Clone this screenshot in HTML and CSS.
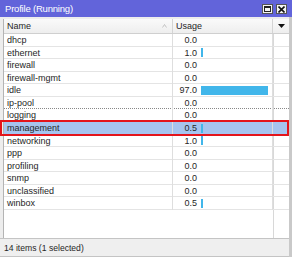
FILE: index.html
```html
<!DOCTYPE html>
<html lang="en">
<head>
  <meta charset="UTF-8">
  <title>Profile (Running)</title>
  <link rel="stylesheet" href="styles.css">
</head>
<body>
  <div class="window">
    <div class="titlebar">
      <span class="title">Profile (Running)</span>
      <div class="title-buttons">
        <span class="tbtn tbtn-max"><span class="max-box"></span></span>
        <span class="tbtn tbtn-close">
          <svg width="7" height="7" viewBox="0 0 7 7"><path d="M0.5 0.5L6.5 6.5M6.5 0.5L0.5 6.5" stroke="#111" stroke-width="1.6"/></svg>
        </span>
      </div>
    </div>

    <div class="list">
      <div class="list-head">
        <div class="col-name">Name
          <svg class="sort" width="5" height="4" viewBox="0 0 5 4"><path d="M0.5 3.5L2.5 0.5L4.5 3.5" fill="none" stroke="#b8b8b8" stroke-width="0.8"/></svg>
        </div>
        <div class="col-usage">Usage</div>
        <div class="col-menu">
          <svg width="7" height="4" viewBox="0 0 7 4"><path d="M0 0H7L3.5 4Z" fill="#111"/></svg>
        </div>
      </div>
      <div class="list-body" id="rows">
        <!-- rows are filled in by the script below -->
      </div>
    </div>

    <div class="status">14 items (1 selected)</div>

    <div class="highlight"></div>
  </div>

  <script>
    // profile usage data
    const profiles = [
      { name: 'dhcp', usage: 0.0 },
      { name: 'ethernet', usage: 1.0 },
      { name: 'firewall', usage: 0.0 },
      { name: 'firewall-mgmt', usage: 0.0 },
      { name: 'idle', usage: 97.0 },
      { name: 'ip-pool', usage: 0.0, focusBelow: true },
      { name: 'logging', usage: 0.0 },
      { name: 'management', usage: 0.5, selected: true },
      { name: 'networking', usage: 1.0 },
      { name: 'ppp', usage: 0.0 },
      { name: 'profiling', usage: 0.0 },
      { name: 'snmp', usage: 0.0 },
      { name: 'unclassified', usage: 0.0 },
      { name: 'winbox', usage: 0.5 },
    ];

    const rowsEl = document.getElementById('rows');

    profiles.forEach(p => {
      const row = document.createElement('div');
      row.className = 'row';
      if (p.selected) row.classList.add('selected');
      if (p.focusBelow) row.classList.add('focus-below');

      let bar = '';
      if (p.usage > 0) {
        const w = Math.max(2, Math.round(p.usage / 100 * 69));
        bar = `<span class="bar" style="width:${w}px"></span>`;
      }

      row.innerHTML = `
        <div class="col-name">${p.name}</div>
        <div class="col-usage"><span class="num">${p.usage.toFixed(1)}</span>${bar}</div>
        <div class="col-menu"></div>
      `;
      rowsEl.appendChild(row);
    });
  </script>
</body>
</html>
```

FILE: styles.css
```css
* {
  box-sizing: border-box;
  margin: 0;
  padding: 0;
}
body {
  width: 292px;
  height: 257px;
  overflow: hidden;
  font-family: 'Liberation Sans', Arial, sans-serif;
  font-size: 9px;
  color: #262626;
  background: #ececec;
}
.window {
  position: relative;
  display: flex;
  flex-direction: column;
  height: 257px;
  background: #ededed;
  border-right: 3px solid #c9c9c9;
}
.titlebar {
  height: 17px;
  flex: none;
  display: flex;
  align-items: center;
  justify-content: space-between;
  background: #6264da;
  color: #fff;
  padding-left: 5px;
  margin-right: -3px;
}
.title {
  font-size: 9.5px;
  letter-spacing: -0.2px;
}
.title-buttons {
  display: flex;
  gap: 3px;
  margin-right: 5px;
  padding-top: 1px;
}
.tbtn {
  width: 11px;
  height: 10px;
  background: #f4f4f4;
  border: 1px solid #555;
  display: flex;
  align-items: center;
  justify-content: center;
}
.max-box {
  width: 7px;
  height: 6px;
  border: 1px solid #222;
  border-top-width: 2px;
}
.list {
  flex: 1;
  margin: 2px 0 0 3px;
  background: #fff;
  border-left: 1px solid #b4b4b4;
  display: flex;
  flex-direction: column;
}
.list-head,
.row {
  display: grid;
  grid-template-columns: 169px 100px 1fr;
}
.list-head {
  height: 15px;
  background: linear-gradient(#fafafa, #eeeeee);
  border-bottom: 1px solid #cfcfcf;
  align-items: center;
}
.list-head > div {
  height: 100%;
  display: flex;
  align-items: center;
  padding-left: 3px;
  border-right: 1px solid #d4d4d4;
}
.list-head .col-name {
  position: relative;
}
.sort {
  position: absolute;
  right: 5px;
  top: 5px;
}
.list-head .col-menu {
  justify-content: center;
  padding-left: 0;
  border-right: none;
}
.list-body {
  flex: 1;
  background: linear-gradient(to right, transparent 269px, #d8d8d8 269px, #d8d8d8 270px, transparent 270px);
}
.row {
  height: 12.57px;
  border-bottom: 1px solid #e4e4e4;
  line-height: 12.6px;
}
.row > div {
  border-right: 1px solid #dedede;
  white-space: nowrap;
}
.row .col-name {
  padding-left: 3px;
}
.row .col-usage {
  display: flex;
  align-items: center;
}
.row .col-menu {
  border-right: none;
}
.num {
  width: 24px;
  text-align: right;
  flex: none;
}
.bar {
  display: inline-block;
  height: 9px;
  margin-left: 4px;
  background: #41b6ea;
}
.row.selected {
  background: #a6c4ef;
}
.row.focus-below {
  border-bottom: 1px dotted #888;
}
.status {
  height: 19px;
  flex: none;
  border-top: 1px solid #c4c4c4;
  border-bottom: 1px solid #c4c4c4;
  padding-left: 4px;
  display: flex;
  align-items: center;
  font-size: 8.6px;
  background: #efefef;
}
.highlight {
  position: absolute;
  left: 0;
  top: 119.5px;
  width: 289px;
  height: 16.5px;
  border: 2px solid #e3141b;
  pointer-events: none;
}
```
